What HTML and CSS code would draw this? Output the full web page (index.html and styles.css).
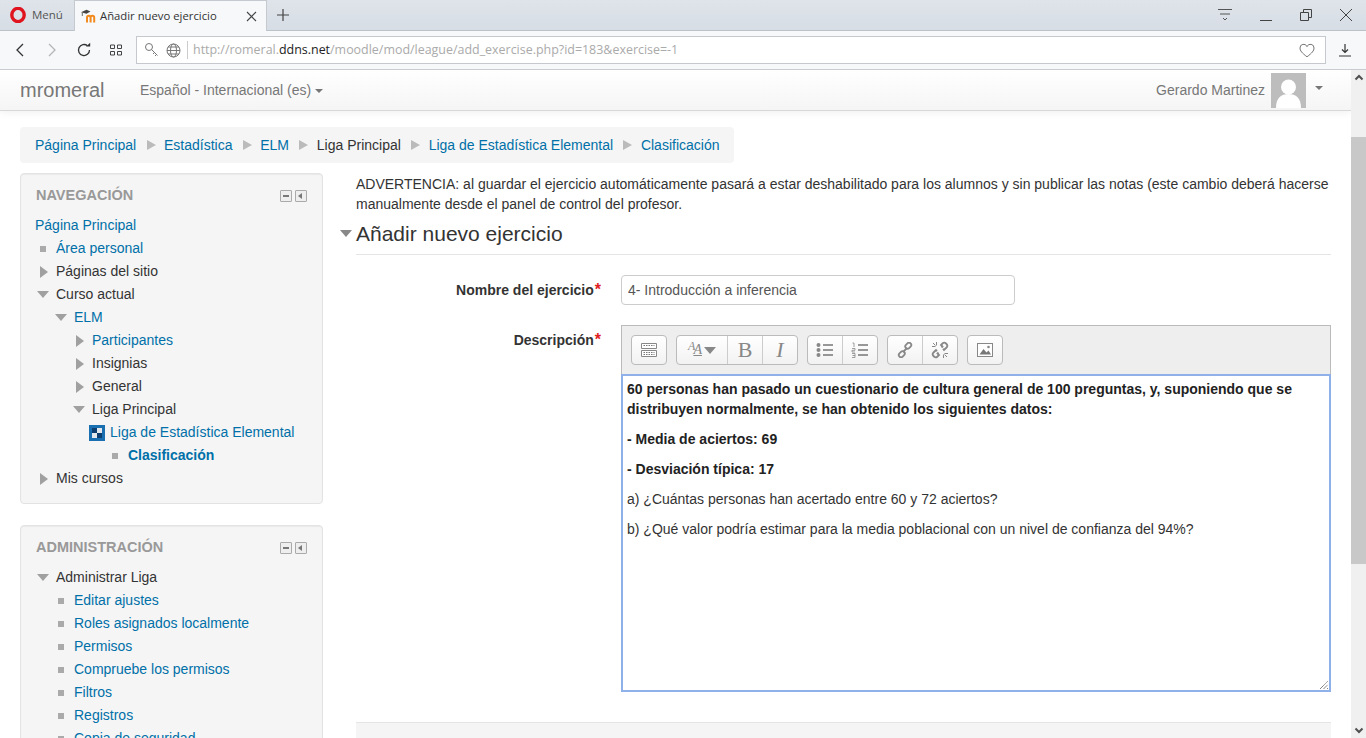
FILE: index.html
```html
<!DOCTYPE html>
<html lang="es">
<head>
    <meta charset="UTF-8">
    <meta name="viewport" content="width=device-width, initial-scale=1.0">
    <title>Añadir nuevo ejercicio</title>
    <link rel="stylesheet" href="styles.css">
</head>
<body>
    <!-- browser frame -->
    <div class="tabbar">
        <div class="menu-tab">
            <svg class="opera" width="16" height="16" viewBox="0 0 16 16"><ellipse cx="8" cy="8" rx="6.2" ry="6.6" fill="none" stroke="#e0141f" stroke-width="3.4"/></svg>
            <span>Menú</span>
        </div>
        <div class="tab">
            <svg width="16" height="14" viewBox="0 0 16 14"><path d="M6 13.500V8.500a1.800 1.800 0 0 1 3.600 0v5M9.600 8.500a1.800 1.800 0 0 1 3.600 0v5" stroke="#f28a1e" stroke-width="2" fill="none"/><path d="M0 3.300L5.500.8l4 1.700-4 2.300z" fill="#444"/><path d="M1.300 3.500v3.500" stroke="#666" fill="none"/></svg>
            <span class="tab-title">Añadir nuevo ejercicio</span>
            <svg class="tab-close" width="11" height="11" viewBox="0 0 11 11"><path d="M1 1l9 9M10 1l-9 9" stroke="#444" stroke-width="1.100" fill="none"/></svg>
        </div>
        <svg class="newtab" width="14" height="14" viewBox="0 0 14 14"><path d="M7 1v12M1 7h12" stroke="#444" stroke-width="1.200" fill="none"/></svg>
        <div class="window-btns">
            <svg width="16" height="14" viewBox="0 0 16 14"><path d="M1 1.500h14M3 6h10M6 10l2 2 2-2" stroke="#555" fill="none"/></svg>
            <svg width="14" height="14" viewBox="0 0 14 14"><path d="M1 12.500h12" stroke="#444" fill="none"/></svg>
            <svg width="14" height="14" viewBox="0 0 14 14"><path d="M1.500 4.500h8v8h-8zM4.500 4.500v-3h8v8h-3" stroke="#444" fill="none"/></svg>
            <svg width="14" height="14" viewBox="0 0 14 14"><path d="M1 1l12 12M13 1L1 13" stroke="#444" fill="none"/></svg>
        </div>
    </div>
    <div class="toolbar">
        <svg class="tool-back" width="12" height="14" viewBox="0 0 12 14"><path d="M9 1L3 7l6 6" stroke="#333" stroke-width="1.300" fill="none"/></svg>
        <svg class="tool-forward" width="12" height="14" viewBox="0 0 12 14"><path d="M3 1l6 6-6 6" stroke="#b5b5b5" stroke-width="1.300" fill="none"/></svg>
        <svg class="tool-reload" width="16" height="16" viewBox="0 0 16 16"><path d="M13.500 8A5.500 5.500 0 1 1 11.500 3.800" stroke="#333" stroke-width="1.300" fill="none"/><path d="M10 4.500h4.200V.8z" fill="#333"/></svg>
        <svg class="tool-grid" width="14" height="12" viewBox="0 0 14 12"><path d="M1.500 1h4v3.500h-4zM8.500 1h4v3.500h-4zM1.500 7.500h4V11h-4zM8.500 7.500h4V11h-4z" stroke="#444" fill="none"/></svg>
        <div class="addressbar">
            <svg width="16" height="16" viewBox="0 0 16 16"><circle cx="5" cy="5" r="3.500" stroke="#777" fill="none"/><path d="M7.500 7.500l6 6M10.500 10.500l-1.500 1.500M12.500 12.500l-1.500 1.500" stroke="#777" fill="none"/></svg>
            <svg class="globe" width="15" height="15" viewBox="0 0 15 15"><circle cx="7.500" cy="7.500" r="6.500" stroke="#777" fill="none"/><ellipse cx="7.500" cy="7.500" rx="3" ry="6.500" stroke="#777" fill="none"/><path d="M1 7.500h13M2 4h11M2 11h11" stroke="#777" fill="none"/></svg>
            <span class="addr-sep"></span>
            <span class="url">http://romeral.<b>ddns.net</b>/moodle/mod/league/add_exercise.php?id=183&amp;exercise=-1</span>
            <svg class="heart" width="16" height="15" viewBox="0 0 16 15"><path d="M8 13.800C3 10 1 7.800 1 5a3.600 3.600 0 0 1 7-1.300A3.600 3.600 0 0 1 15 5c0 2.800-2 5-7 8.800z" stroke="#777" fill="none"/></svg>
        </div>
        <svg class="download" width="14" height="14" viewBox="0 0 14 14"><path d="M7 1v8M4 6.500L7 9.500l3-3M1 13h12" stroke="#333" stroke-width="1.200" fill="none"/></svg>
    </div>

    <div class="viewport">
        <div class="page">
            <nav class="navbar">
                <a class="brand">mromeral</a>
                <a class="lang">Español - Internacional (es)<i class="caret"></i></a>
                <div class="user">
                    <span>Gerardo Martinez</span>
                    <svg class="avatar" width="35" height="35" viewBox="0 0 35 35"><rect width="35" height="35" fill="#bdbdbd"/><circle cx="17.500" cy="14" r="7.500" fill="#fff"/><path d="M5 35c0-10 5-14 12.500-14S30 25 30 35z" fill="#fff"/></svg>
                    <i class="caret user-caret"></i>
                </div>
            </nav>

            <div class="content">
                <ul class="breadcrumb">
                    <li><a>Página Principal</a></li>
                    <li class="sep"></li>
                    <li><a>Estadística</a></li>
                    <li class="sep"></li>
                    <li><a>ELM</a></li>
                    <li class="sep"></li>
                    <li>Liga Principal</li>
                    <li class="sep"></li>
                    <li><a>Liga de Estadística Elemental</a></li>
                    <li class="sep"></li>
                    <li><a>Clasificación</a></li>
                </ul>

                <div class="columns">
                    <aside class="sidebar">
                        <section class="block">
                            <div class="block-head">
                                <h2>Navegación</h2>
                                <span class="block-ctl"><i class="ctl-min"></i><i class="ctl-dock"></i></span>
                            </div>
                            <ul class="tree">
                                <li class="lvl0 none"><a>Página Principal</a></li>
                                <li class="lvl0 leaf"><a>Área personal</a></li>
                                <li class="lvl0 closed">Páginas del sitio</li>
                                <li class="lvl0 open">Curso actual</li>
                                <li class="lvl1 open"><a>ELM</a></li>
                                <li class="lvl2 closed"><a>Participantes</a></li>
                                <li class="lvl2 closed">Insignias</li>
                                <li class="lvl2 closed">General</li>
                                <li class="lvl2 open">Liga Principal</li>
                                <li class="lvl3 modicon">
                                    <svg width="16" height="16" viewBox="0 0 16 16"><rect width="16" height="16" fill="#1a6fb0"/><rect x="3" y="3" width="5" height="5" fill="#0d3f70"/><rect x="8" y="3" width="5" height="5" fill="#e4e8ec"/><rect x="3" y="8" width="5" height="5" fill="#e4e8ec"/><rect x="8" y="8" width="5" height="5" fill="#0d3f70"/></svg>
                                    <a>Liga de Estadística Elemental</a>
                                </li>
                                <li class="lvl4 leaf"><a class="current">Clasificación</a></li>
                                <li class="lvl0 closed">Mis cursos</li>
                            </ul>
                        </section>
                        <section class="block">
                            <div class="block-head">
                                <h2>Administración</h2>
                                <span class="block-ctl"><i class="ctl-min"></i><i class="ctl-dock"></i></span>
                            </div>
                            <ul class="tree">
                                <li class="lvl0 open">Administrar Liga</li>
                                <li class="lvl1 leaf"><a>Editar ajustes</a></li>
                                <li class="lvl1 leaf"><a>Roles asignados localmente</a></li>
                                <li class="lvl1 leaf"><a>Permisos</a></li>
                                <li class="lvl1 leaf"><a>Compruebe los permisos</a></li>
                                <li class="lvl1 leaf"><a>Filtros</a></li>
                                <li class="lvl1 leaf"><a>Registros</a></li>
                                <li class="lvl1 leaf"><a>Copia de seguridad</a></li>
                            </ul>
                        </section>
                    </aside>

                    <main class="main">
                        <p class="warning">ADVERTENCIA: al guardar el ejercicio automáticamente pasará a estar deshabilitado para los alumnos y sin publicar las notas (este cambio deberá hacerse manualmente desde el panel de control del profesor.</p>
                        <form>
                            <h3 class="legend"><i class="legend-arrow"></i>Añadir nuevo ejercicio</h3>
                            <div class="field">
                                <label>Nombre del ejercicio<em>*</em></label>
                                <input class="text-input" type="text" value="4- Introducción a inferencia">
                            </div>
                            <div class="field">
                                <label>Descripción<em>*</em></label>
                                <div class="editor">
                                    <div class="editor-tools">
                                        <div class="btn-group">
                                            <button type="button"><svg width="18" height="16" viewBox="0 0 18 16"><path d="M1.500 1.500h15v5h-15zM1.500 8.500h15v6h-15z" fill="#fff" stroke="#888"/><path d="M3.500 3.500h11M3.500 10.500h11M3.500 12.500h11" stroke="#777" stroke-dasharray="1.500 1"/></svg></button>
                                        </div>
                                        <div class="btn-group">
                                            <button type="button" class="wide"><span class="a-small">A</span><span class="a-big">A</span><i class="tool-caret"></i></button>
                                            <button type="button" class="serif">B</button>
                                            <button type="button" class="serif ital">I</button>
                                        </div>
                                        <div class="btn-group">
                                            <button type="button"><svg width="18" height="16" viewBox="0 0 18 16"><circle cx="2.500" cy="3" r="2" fill="#888"/><circle cx="2.500" cy="8" r="2" fill="#888"/><circle cx="2.500" cy="13" r="2" fill="#888"/><path d="M7 3h10M7 8h10M7 13h10" stroke="#777" stroke-width="1.500"/></svg></button>
                                            <button type="button"><svg width="18" height="16" viewBox="0 0 18 16"><path d="M1.500 1h1.500v4M1 6.500h3v1.800H1v1.700h3M1 11.500h3v4H1M1.500 13.500H4" stroke="#888" stroke-width=".8" fill="none"/><path d="M7 3h10M7 8h10M7 13h10" stroke="#777" stroke-width="1.500"/></svg></button>
                                        </div>
                                        <div class="btn-group">
                                            <button type="button"><svg width="16" height="16" viewBox="0 0 16 16"><g fill="none" stroke="#888" stroke-width="1.800"><rect x="8" y="1.500" width="6.500" height="4.500" rx="2.200" transform="rotate(-45 11.200 3.700)"/><rect x="1.500" y="10" width="6.500" height="4.500" rx="2.200" transform="rotate(-45 4.800 12.200)"/><path d="M6 10l4-4"/></g></svg></button>
                                            <button type="button"><svg width="18" height="18" viewBox="0 0 18 18"><g fill="none" stroke="#888" stroke-width="1.800"><path d="M10.500 6.500l1-1-1.500-1.500 1.500-1.500a2.500 2.500 0 0 1 3.500 0l.5.5a2.500 2.500 0 0 1 0 3.500L13 8.900l-1-1"/><path d="M7.500 11.500l-1 1 1.500 1.500-1.500 1.500a2.500 2.500 0 0 1-3.500 0l-.5-.5a2.500 2.500 0 0 1 0-3.500L5 9.100l1 1"/></g><path d="M5.500 1v3.500M1 5.500h3.500M2 2l2.500 2.500M12.500 13.500V17M13.500 12.500H17M13.500 13.500L16 16" stroke="#888" fill="none"/></svg></button>
                                        </div>
                                        <div class="btn-group">
                                            <button type="button"><svg width="16" height="14" viewBox="0 0 16 14"><rect x=".5" y=".5" width="15" height="13" fill="#fff" stroke="#888"/><path d="M2.500 11.500l4-5.500 3 3.500 2-2 2.500 4z" fill="#777"/><circle cx="11.500" cy="4" r="1.300" fill="#888"/></svg></button>
                                        </div>
                                    </div>
                                    <div class="editor-body">
                                        <p><strong>60 personas han pasado un cuestionario de cultura general de 100 preguntas, y, suponiendo que se distribuyen normalmente, se han obtenido los siguientes datos:</strong></p>
                                        <p><strong>- Media de aciertos: 69</strong></p>
                                        <p><strong>- Desviación típica: 17</strong></p>
                                        <p>a) ¿Cuántas personas han acertado entre 60 y 72 aciertos?</p>
                                        <p>b) ¿Qué valor podría estimar para la media poblacional con un nivel de confianza del 94%?</p>
                                        <svg class="grip" width="10" height="10" viewBox="0 0 10 10"><path d="M1 9l8-8M4.500 9L9 4.500M8 9l1-1" stroke="#555" stroke-dasharray="1 .6" fill="none"/></svg>
                                    </div>
                                </div>
                            </div>
                            <div class="next-fieldset"></div>
                        </form>
                    </main>
                </div>
            </div>
        </div>
        <div class="scrollbar">
            <svg width="10" height="7" viewBox="0 0 10 7"><path d="M1.500 5.500L5 2l3.500 3.500" stroke="#505050" stroke-width="2" fill="none"/></svg>
            <div class="scroll-track"><div class="scroll-thumb"></div></div>
            <svg width="10" height="7" viewBox="0 0 10 7"><path d="M1.500 1.500L5 5l3.500-3.500" stroke="#505050" stroke-width="2" fill="none"/></svg>
        </div>
    </div>
</body>
</html>
```

FILE: styles.css
```css
html, body {
    height: 100%;
}
body {
    margin: 0;
    overflow: hidden;
    display: flex;
    flex-direction: column;
    font-family: "Liberation Sans", Arial, sans-serif;
    font-size: 14px;
    line-height: 20px;
    color: #333;
    background-color: #fff;
}
a {
    color: #0070a8;
    text-decoration: none;
}
ul {
    list-style: none;
    margin: 0;
    padding: 0;
}

/* browser frame */
.tabbar {
    height: 30px;
    display: flex;
    align-items: flex-end;
    flex-shrink: 0;
    background: linear-gradient(#dfe4ea, #d7dde5);
    border-bottom: 1px solid #bcc2c9;
}
.menu-tab {
    width: 74px;
    height: 30px;
    display: flex;
    align-items: center;
    padding-left: 10px;
    box-sizing: border-box;
    gap: 6px;
    font-family: "Open Sans", sans-serif;
    font-size: 11.500px;
    color: #555;
}
.tab {
    width: 193px;
    height: 31px;
    margin-bottom: -1px;
    box-sizing: border-box;
    display: flex;
    align-items: center;
    padding: 0 9px 0 6px;
    gap: 3px;
    background-color: #f6f8fa;
    border: 1px solid #c5cad0;
    border-bottom: none;
    font-family: "Open Sans", sans-serif;
    font-size: 11.300px;
    color: #333;
}
.tab-title {
    flex: 1;
    white-space: nowrap;
}
.newtab {
    margin: 0 0 8px 9px;
}
.window-btns {
    margin-left: auto;
    height: 30px;
    display: flex;
    align-items: center;
    gap: 26px;
    padding: 0 13px 0 0;
}
.toolbar {
    height: 39px;
    flex-shrink: 0;
    display: flex;
    align-items: center;
    box-sizing: border-box;
    background-color: #f6f8fa;
    border-bottom: 1px solid #c8ccd0;
}
.tool-back {
    margin-left: 14px;
}
.tool-forward {
    margin-left: 20px;
}
.tool-reload {
    margin-left: 18px;
}
.tool-grid {
    margin-left: 17px;
}
.addressbar {
    width: 1190px;
    height: 28px;
    margin-left: 13px;
    box-sizing: border-box;
    display: flex;
    align-items: center;
    padding: 0 10px 0 7px;
    background-color: #fff;
    border: 1px solid #c5c9cd;
}
.globe {
    margin-left: 6px;
}
.addr-sep {
    width: 1px;
    height: 18px;
    margin: 0 5px 0 6px;
    background-color: #ccc;
}
.url {
    flex: 1;
    font-family: "Open Sans", sans-serif;
    font-size: 12.450px;
    color: #aaa;
    white-space: nowrap;
}
.url b {
    font-weight: normal;
    color: #222;
}
.download {
    margin-left: 12px;
}

/* page area */
.viewport {
    flex: 1;
    min-height: 0;
    display: flex;
}
.page {
    flex: 1;
    min-width: 0;
    overflow: hidden;
}
.scrollbar {
    width: 15px;
    display: flex;
    flex-direction: column;
    align-items: center;
    background-color: #f0f0f0;
}
.scrollbar svg {
    flex-shrink: 0;
    margin: 4px 0;
}
.scroll-track {
    flex: 1;
    width: 100%;
    padding: 52px 0 159px;
    box-sizing: border-box;
}
.scroll-thumb {
    height: 100%;
    background-color: #c8c8c8;
}

.navbar {
    height: 40px;
    display: flex;
    align-items: center;
    padding: 0 20px;
    background: linear-gradient(#fff, #f5f5f5);
    border-bottom: 1px solid #d8d8d8;
    box-shadow: 0 1px 8px rgba(0, 0, 0, .07);
    color: #777;
}
.brand {
    width: 120px;
    font-size: 20px;
    color: #777;
}
.lang {
    color: #777;
}
.caret {
    display: inline-block;
    margin-left: 4px;
    vertical-align: middle;
    border-top: 4px solid #777;
    border-left: 4px solid transparent;
    border-right: 4px solid transparent;
}
.user {
    margin-left: auto;
    display: flex;
    align-items: center;
}
.avatar {
    margin-left: 6px;
}
.user-caret {
    margin: 0 8px 4px 9px;
}

.content {
    padding: 16px 20px 0;
}
.breadcrumb {
    display: inline-flex;
    align-items: center;
    height: 36px;
    padding: 0 15px;
    box-sizing: border-box;
    background-color: #f5f5f5;
    border-radius: 4px;
    vertical-align: top;
}
.sep {
    width: 0;
    height: 0;
    margin: 0 8.400px 0 10.400px;
    border-left: 9px solid #bbb;
    border-top: 5px solid transparent;
    border-bottom: 5px solid transparent;
}
.columns {
    display: flex;
    margin-top: 10px;
    gap: 33px;
    align-items: flex-start;
}

/* sidebar */
.sidebar {
    width: 303px;
    flex-shrink: 0;
}
.block {
    box-sizing: border-box;
    margin-bottom: 21px;
    padding: 8px 15px 13px 14px;
    background-color: #f5f5f5;
    border: 1px solid #e3e3e3;
    border-radius: 4px;
    box-shadow: inset 0 1px 1px rgba(0, 0, 0, .05);
}
.block-head {
    display: flex;
    justify-content: space-between;
    align-items: center;
    height: 24px;
    margin-bottom: 8px;
}
.block h2 {
    margin: 2px 0 0 1px;
    font-size: 14.500px;
    font-weight: bold;
    text-transform: uppercase;
    color: #999;
}
.block-ctl {
    display: flex;
    gap: 3px;
    margin-top: 4px;
}
.block-ctl i {
    width: 10px;
    height: 10px;
    border: 1px solid #aaa;
    border-radius: 1px;
    background-color: #eee;
    position: relative;
}
.ctl-min::after {
    content: "";
    position: absolute;
    left: 2px;
    top: 4px;
    width: 6px;
    height: 2px;
    background-color: #777;
}
.ctl-dock::after {
    content: "";
    position: absolute;
    left: 2px;
    top: 2px;
    border-right: 4px solid #777;
    border-top: 3px solid transparent;
    border-bottom: 3px solid transparent;
}
.tree li {
    height: 23px;
    line-height: 23px;
    display: flex;
    align-items: center;
    white-space: nowrap;
}
.tree li::before {
    content: "";
    flex-shrink: 0;
    width: 21px;
}
.lvl1 { padding-left: 18px; }
.lvl2 { padding-left: 36px; }
.lvl3 { padding-left: 54px; }
.lvl4 { padding-left: 72px; }
.tree .none::before,
.tree .modicon::before {
    display: none;
}
.tree .modicon svg {
    margin-right: 5px;
}
.tree .leaf::before {
    width: 6px;
    height: 6px;
    margin: 0 10px 0 5px;
    background-color: #aaa;
}
.tree .closed::before {
    width: 0;
    height: 0;
    margin: 0 8px 0 5px;
    border-left: 8px solid #a0a0a0;
    border-top: 6px solid transparent;
    border-bottom: 6px solid transparent;
}
.tree .open::before {
    width: 0;
    height: 0;
    margin: 0 7px 0 2px;
    border-top: 7px solid #a0a0a0;
    border-left: 6px solid transparent;
    border-right: 6px solid transparent;
}
.current {
    font-weight: bold;
}

/* main column */
.main {
    width: 975px;
    flex-shrink: 0;
    padding-top: 1px;
}
.warning {
    margin: 0;
    line-height: 20px;
    color: #333;
}
.legend {
    margin: 4px 0 0;
    height: 37px;
    box-sizing: border-box;
    padding-top: 1px;
    position: relative;
    font-size: 21px;
    line-height: 30px;
    font-weight: normal;
    border-bottom: 1px solid #e5e5e5;
}
.legend-arrow {
    position: absolute;
    left: -16px;
    top: 12px;
    border-top: 7px solid #888;
    border-left: 6.500px solid transparent;
    border-right: 6.500px solid transparent;
}
.field {
    display: flex;
    margin-top: 20px;
}
.field label {
    width: 245px;
    flex-shrink: 0;
    padding-top: 5px;
    text-align: right;
    font-weight: bold;
    color: #333;
}
.field em {
    margin-left: 1px;
    font-style: normal;
    font-size: 16px;
    color: #e02020;
}
.text-input {
    width: 394px;
    height: 30px;
    margin-left: 20px;
    padding: 4px 6px;
    box-sizing: border-box;
    border: 1px solid #ccc;
    border-radius: 4px;
    font-family: inherit;
    font-size: 14px;
    color: #555;
}
.editor {
    width: 710px;
    margin-left: 20px;
    box-sizing: border-box;
    border: 1px solid #bbb;
    border-bottom: none;
    background-color: #eee;
}
.editor-tools {
    display: flex;
    height: 48px;
    box-sizing: border-box;
    padding: 9px 9px 0;
    gap: 9px;
}
.btn-group {
    display: flex;
    height: 30px;
    border: 1px solid #bbb;
    border-radius: 4px;
    box-sizing: border-box;
    background: linear-gradient(#fff, #f2f2f2);
}
.btn-group button {
    width: 35px;
    height: 28px;
    padding: 0;
    display: flex;
    align-items: center;
    justify-content: center;
    background: none;
    border: none;
    border-left: 1px solid #ccc;
    color: #888;
}
.btn-group button:first-child {
    width: 34px;
    border-left: none;
}
.btn-group .wide:first-child {
    width: 50px;
}
.serif {
    font-family: "Liberation Serif", serif;
    font-size: 22px;
}
.ital {
    font-style: italic;
}
.a-small {
    font-family: "Liberation Serif", serif;
    font-size: 12px;
    font-style: italic;
    margin-bottom: 7px;
}
.a-big {
    font-family: "Liberation Serif", serif;
    font-size: 14px;
    font-style: italic;
    text-decoration: underline;
    margin-left: -2px;
}
.tool-caret {
    margin-left: 2px;
    border-top: 7px solid #888;
    border-left: 6px solid transparent;
    border-right: 6px solid transparent;
}
.editor-body {
    height: 318px;
    margin: 0 -1px 0 -1px;
    box-sizing: border-box;
    padding: 3px 4px;
    position: relative;
    background-color: #fff;
    border: 2px solid #8fb0e8;
    color: #333;
}
.editor-body p {
    margin: 0 0 10px;
}
.editor-body strong {
    color: #222;
}
.grip {
    position: absolute;
    right: 0;
    bottom: 0;
}
.next-fieldset {
    height: 60px;
    margin-top: 30px;
    background-color: #f5f5f5;
    border-top: 1px solid #e5e5e5;
}
```
